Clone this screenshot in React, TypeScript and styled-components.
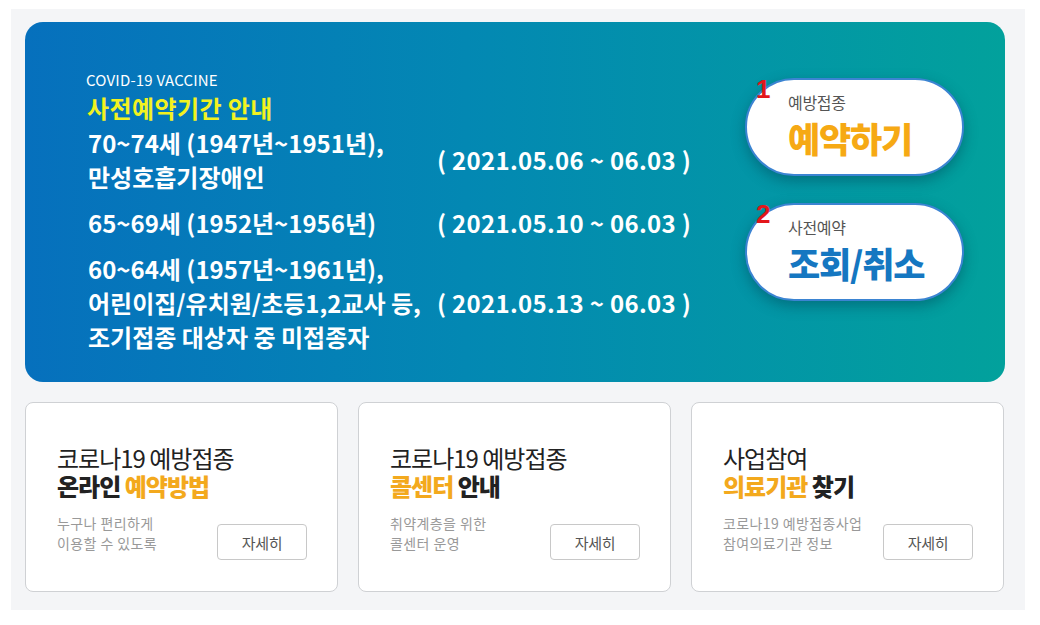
import React from "react";
import styled, { createGlobalStyle } from "styled-components";

const Global = createGlobalStyle`
  html, body { margin: 0; padding: 0; background: #ffffff; }
  body { font-family: "Noto Sans CJK KR", "Noto Sans", sans-serif; }
  * { box-sizing: border-box; }
`;

const Page = styled.div`
  padding: 9px 0 0 11px;
`;

const Panel = styled.div`
  width: 1014px;
  background: #f4f5f7;
  padding: 13px 20px 18px 14px;
  display: flex;
  flex-direction: column;
  gap: 20px;
`;

const Banner = styled.section`
  height: 360px;
  border-radius: 18px;
  background: linear-gradient(90deg, #0670bd 0%, #0388b3 45%, #02a19c 100%);
  display: flex;
  justify-content: space-between;
  padding: 48px 41px 0 61px;
`;

const Info = styled.div`
  display: flex;
  flex-direction: column;
  color: #fff;
`;

const Eyebrow = styled.div`
  font-size: 15px;
  line-height: 20px;
  letter-spacing: 0.2px;
  color: #fff;
`;

const Headline = styled.div`
  font-size: 24px;
  line-height: 32px;
  font-weight: 700;
  letter-spacing: 0.4px;
  color: #f2f21f;
  margin-top: 2px;
  padding-left: 1px;
`;

const Schedule = styled.div`
  display: grid;
  grid-template-columns: 349px auto;
  row-gap: 12px;
  align-items: center;
  padding-left: 2px;
  margin-top: 2px;
`;

const Target = styled.div`
  font-size: 24px;
  line-height: 34px;
  font-weight: 700;
  letter-spacing: 0;
  white-space: nowrap;
`;

const Period = styled.div`
  font-size: 24px;
  line-height: 34px;
  font-weight: 700;
  letter-spacing: 0.3px;
  white-space: nowrap;
`;

const Actions = styled.div`
  display: flex;
  flex-direction: column;
  gap: 27px;
  padding-top: 8px;
`;

const Pill = styled.a`
  position: relative;
  width: 219px;
  height: 98px;
  border-radius: 49px;
  background: #fff;
  border: 2px solid #3b84d2;
  box-shadow: 0 5px 14px rgba(0, 40, 60, 0.35);
  display: flex;
  flex-direction: column;
  justify-content: center;
  padding: 0 0 4px 41px;
  text-decoration: none;
`;

const Num = styled.span`
  position: absolute;
  left: 9px;
  top: -6px;
  font-family: "Liberation Sans", Arial, sans-serif;
  font-size: 26px;
  font-weight: 700;
  color: #e3161b;
`;

const PillSub = styled.span`
  font-size: 16px;
  line-height: 20px;
  color: #555;
  letter-spacing: -0.3px;
`;

const PillMain = styled.span<{ $color: string }>`
  font-size: 35px;
  line-height: 40px;
  font-weight: 800;
  letter-spacing: -1.2px;
  color: ${(p) => p.$color};
  margin-top: 6px;
`;

const Cards = styled.div`
  display: grid;
  grid-template-columns: repeat(3, 313px);
  column-gap: 20px;
`;

const Card = styled.article`
  height: 190px;
  background: #fff;
  border: 1px solid #cfd1d4;
  border-radius: 8px;
  padding: 41px 30px 0 31px;
  display: flex;
  flex-direction: column;
`;

const Title = styled.div`
  font-size: 24px;
  line-height: 28px;
  letter-spacing: -1px;
  color: #222;
  font-weight: 400;
`;

const TitleStrong = styled.div`
  font-size: 24px;
  line-height: 28px;
  letter-spacing: -1px;
  color: #222;
  font-weight: 800;
`;

const Accent = styled.span`
  color: #f3a91d;
`;

const Bottom = styled.div`
  display: flex;
  justify-content: space-between;
  align-items: flex-end;
  margin-top: 12px;
`;

const Desc = styled.div`
  font-size: 14px;
  line-height: 20px;
  color: #999;
  letter-spacing: 0.4px;
  padding-bottom: 7px;
`;

const More = styled.button`
  width: 90px;
  height: 36px;
  border: 1px solid #c8c8c8;
  border-radius: 4px;
  background: #fff;
  font-family: inherit;
  font-size: 15px;
  color: #555;
  letter-spacing: -0.3px;
  margin-top: 12px;
`;

const rows: { target: React.ReactNode; period: string }[] = [
  {
    target: (
      <>
        70~74세 (1947년~1951년),
        <br />
        만성호흡기장애인
      </>
    ),
    period: "( 2021.05.06 ~ 06.03 )",
  },
  { target: "65~69세 (1952년~1956년)", period: "( 2021.05.10 ~ 06.03 )" },
  {
    target: (
      <>
        60~64세 (1957년~1961년),
        <br />
        어린이집/유치원/초등1,2교사 등,
        <br />
        조기접종 대상자 중 미접종자
      </>
    ),
    period: "( 2021.05.13 ~ 06.03 )",
  },
];

const cards = [
  {
    line1: "코로나19 예방접종",
    line2: (
      <>
        온라인 <Accent>예약방법</Accent>
      </>
    ),
    desc: ["누구나 편리하게", "이용할 수 있도록"],
  },
  {
    line1: "코로나19 예방접종",
    line2: (
      <>
        <Accent>콜센터</Accent> 안내
      </>
    ),
    desc: ["취약계층을 위한", "콜센터 운영"],
  },
  {
    line1: "사업참여",
    line2: (
      <>
        <Accent>의료기관</Accent> 찾기
      </>
    ),
    desc: ["코로나19 예방접종사업", "참여의료기관 정보"],
  },
];

export default function App() {
  return (
    <Page>
      <Global />
      <Panel>
        <Banner>
          <Info>
            <Eyebrow>COVID-19 VACCINE</Eyebrow>
            <Headline>사전예약기간 안내</Headline>
            <Schedule>
              {rows.map((r, i) => (
                <React.Fragment key={i}>
                  <Target>{r.target}</Target>
                  <Period>{r.period}</Period>
                </React.Fragment>
              ))}
            </Schedule>
          </Info>
          <Actions>
            <Pill href="#">
              <Num>1</Num>
              <PillSub>예방접종</PillSub>
              <PillMain $color="#f6a914">예약하기</PillMain>
            </Pill>
            <Pill href="#">
              <Num>2</Num>
              <PillSub>사전예약</PillSub>
              <PillMain $color="#1577c1">조회/취소</PillMain>
            </Pill>
          </Actions>
        </Banner>
        <Cards>
          {cards.map((c, i) => (
            <Card key={i}>
              <Title>{c.line1}</Title>
              <TitleStrong>{c.line2}</TitleStrong>
              <Bottom>
                <Desc>
                  {c.desc[0]}
                  <br />
                  {c.desc[1]}
                </Desc>
                <More>자세히</More>
              </Bottom>
            </Card>
          ))}
        </Cards>
      </Panel>
    </Page>
  );
}
